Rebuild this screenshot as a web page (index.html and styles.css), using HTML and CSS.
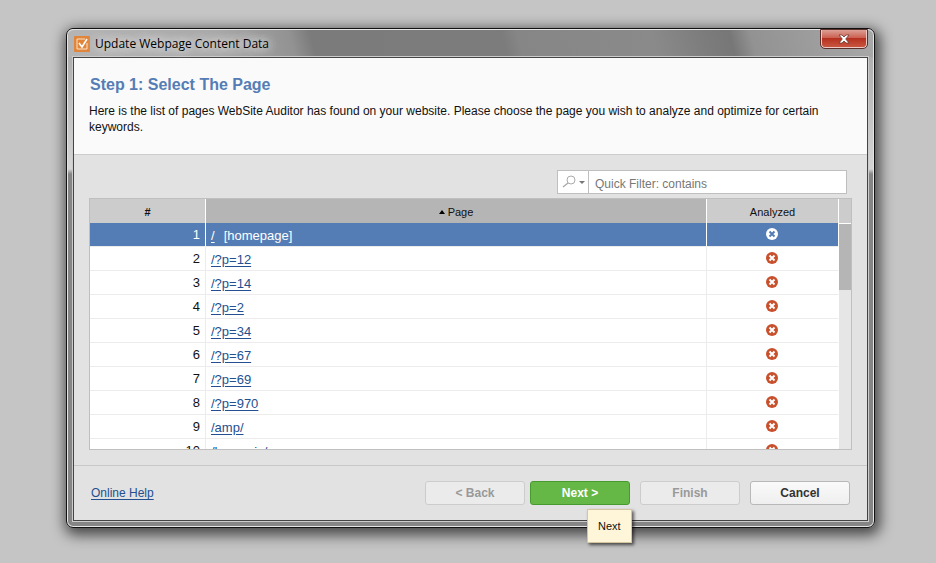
FILE: index.html
```html
<!DOCTYPE html>
<html lang="en">
<head>
    <title>Update Webpage Content Data</title>
    <meta charset="utf-8">
    <link rel="stylesheet" href="styles.css">
</head>

<body>
    <svg class="sprite">
        <symbol id="cross" viewBox="0 0 12 12">
            <circle cx="6" cy="6" r="6" fill="currentColor"/>
            <path class="cross-mark" d="M3.500 3.500l5 5M8.500 3.500l-5 5"/>
        </symbol>
    </svg>
    <div class="window">
        <div class="titlebar">
            <svg class="logo" viewBox="0 0 16 16">
                <rect width="16" height="16" rx="1" fill="#e0853a"/>
                <path d="M11 3H3v10h10V7" fill="none" stroke="#fbe3c8" stroke-width="1"/>
                <path d="M5 7l3 4 5-8" fill="none" stroke="#fff" stroke-width="1.6"/>
            </svg>
            <span class="title">Update Webpage Content Data</span>
            <button class="close" aria-label="Close">
                <svg viewBox="0 0 12 10"><path d="M1 1h3l2 2 2-2h3L7.700 5 11 9H8L6 7 4 9H1l3.300-4z" fill="#fff" stroke="#6b3a36" stroke-width=".8"/></svg>
            </button>
        </div>
        <div class="client">
            <div class="intro">
                <h1>Step 1: Select The Page</h1>
                <p>Here is the list of pages WebSite Auditor has found on your website. Please choose the page you wish to analyze and optimize for certain keywords.</p>
            </div>
            <div class="content">
                <div class="filter">
                    <button class="filter-type" aria-label="Filter type">
                        <svg viewBox="0 0 24 14">
                            <circle cx="9" cy="5" r="4" fill="none" stroke="#aaa"/>
                            <path d="M6 8l-5 4" stroke="#aaa" stroke-width="1.500"/>
                            <path d="M17 6h6l-3 3z" fill="#777"/>
                        </svg>
                    </button>
                    <input type="text" placeholder="Quick Filter: contains" aria-label="Quick Filter">
                </div>
                <div class="pane">
                    <table>
                        <thead>
                            <tr>
                                <th class="num">#</th>
                                <th class="sorted"><svg class="arrow" viewBox="0 0 6 4"><path d="M0 4l3-4 3 4z"/></svg>Page</th>
                                <th class="state">Analyzed</th>
                            </tr>
                        </thead>
                        <tbody>
                            <tr class="selected"><td class="num">1</td><td><a href="#">/</a><span class="note">[homepage]</span></td><td class="state"><svg><use href="#cross"/></svg></td></tr>
                            <tr><td class="num">2</td><td><a href="#">/?p=12</a></td><td class="state"><svg><use href="#cross"/></svg></td></tr>
                            <tr><td class="num">3</td><td><a href="#">/?p=14</a></td><td class="state"><svg><use href="#cross"/></svg></td></tr>
                            <tr><td class="num">4</td><td><a href="#">/?p=2</a></td><td class="state"><svg><use href="#cross"/></svg></td></tr>
                            <tr><td class="num">5</td><td><a href="#">/?p=34</a></td><td class="state"><svg><use href="#cross"/></svg></td></tr>
                            <tr><td class="num">6</td><td><a href="#">/?p=67</a></td><td class="state"><svg><use href="#cross"/></svg></td></tr>
                            <tr><td class="num">7</td><td><a href="#">/?p=69</a></td><td class="state"><svg><use href="#cross"/></svg></td></tr>
                            <tr><td class="num">8</td><td><a href="#">/?p=970</a></td><td class="state"><svg><use href="#cross"/></svg></td></tr>
                            <tr><td class="num">9</td><td><a href="#">/amp/</a></td><td class="state"><svg><use href="#cross"/></svg></td></tr>
                            <tr><td class="num">10</td><td><a href="#">/humanis/</a></td><td class="state"><svg><use href="#cross"/></svg></td></tr>
                        </tbody>
                    </table>
                    <div class="scrollbar"><div class="thumb"></div></div>
                </div>
            </div>
            <div class="footer">
                <a class="help" href="#">Online Help</a>
                <button disabled>&lt; Back</button>
                <div class="next">
                    <button class="primary">Next &gt;</button>
                    <div class="tooltip">Next</div>
                </div>
                <button class="finish" disabled>Finish</button>
                <button>Cancel</button>
            </div>
        </div>
    </div>
</body>

</html>
```
FILE: styles.css
```css
* {
    box-sizing: border-box;
}

body {
    margin: 0;
    padding: 28px 61px 35px 66px;
    background-color: #c5c5c5;
    font-family: "Liberation Sans", Arial, sans-serif;
    font-size: 12px;
    color: #111;
}

button, input {
    font-family: inherit;
    font-size: 12px;
    margin: 0;
}

.sprite {
    display: none;
}

.window {
    border: 1px solid #111;
    border-radius: 7px;
    padding: 0 6px 6px;
    background: linear-gradient(#a5a5a5 0, #d5d5d5 140px, #858585 145px, #858585 100%);
    box-shadow: inset 0 0 0 1px #e4e4e4, 2px 4px 14px 3px rgba(0, 0, 0, .65);
    background-clip: padding-box;
}

/* title bar */
.titlebar {
    display: flex;
    align-items: center;
    height: 28px;
    margin: 0 -5px;
    padding: 0 6px 0 6px;
    border-top: 1px solid #e4e4e4;
    border-radius: 6px 6px 0 0;
    background: linear-gradient(75deg, #b5b5b5 0, #a9a9a9 150px, #929292 220px, #7b7b7b 240px, #7c7c7c 425px, #868686 440px, #8a8a8a 570px, #7c7c7c 620px, #777 645px, #929292 665px, #a8a8a8 100%);
}

.logo {
    width: 16px;
    height: 16px;
}

.title {
    flex: 1;
    padding-left: 5px;
    font-family: "Open Sans", sans-serif;
    color: #000;
    text-shadow: 0 0 8px #ddd, 0 0 8px #ddd, 0 0 12px #ddd;
}

.close {
    align-self: flex-start;
    display: flex;
    align-items: center;
    justify-content: center;
    width: 46px;
    height: 18px;
    padding: 0;
    border: 1px solid #eccac5;
    border-top: 0;
    border-radius: 0 0 4px 4px;
    outline: 1px solid #5b2f2b;
    background: linear-gradient(#dda096, #cb6152 45%, #b5311f 50%, #c95540);
}

.close svg {
    width: 12px;
    height: 10px;
}

.client {
    border: 1px solid #444;
    outline: 1px solid #ccc;
    background-color: #e2e2e2;
}

.intro {
    padding: 17px 15px 19px;
    border-bottom: 1px solid #ccc;
    background-color: #fafafa;
}

h1 {
    margin: 0 0 8px 1px;
    font-size: 16px;
    line-height: 20px;
    color: #557db5;
}

p {
    margin: 0;
    line-height: 16px;
}

.content {
    padding: 15px 15px;
}

/* quick filter */
.filter {
    display: flex;
    width: 290px;
    height: 24px;
    margin: 0 5px 4px auto;
    border: 1px solid #bfbfbf;
    background-color: #fff;
}

.filter-type {
    width: 31px;
    padding: 0 0 0 4px;
    border: 0;
    border-right: 1px solid #bfbfbf;
    background: none;
}

.filter-type svg {
    display: block;
    width: 24px;
    height: 14px;
}

.filter input {
    flex: 1;
    min-width: 0;
    padding: 3px 6px 0;
    border: 0;
    background: none;
}

.filter input::placeholder {
    color: #777;
}

/* page list */
.pane {
    display: flex;
    height: 252px;
    overflow: hidden;
    border: 1px solid #bfbfbf;
    background-color: #fff;
}

table {
    flex: 1;
    table-layout: fixed;
    border-collapse: separate;
    border-spacing: 0;
    font-size: 13px;
}

th {
    height: 24px;
    padding: 2px 0 0;
    border-right: 1px solid #fff;
    background-color: #ccc;
    font-size: 11px;
    font-weight: normal;
}

th.num {
    width: 116px;
    font-weight: bold;
}

th.state {
    width: 132px;
}

th.sorted {
    background-color: #b5b5b5;
}

.arrow {
    width: 6px;
    height: 4px;
    margin-right: 3px;
    vertical-align: 2px;
}

td {
    height: 24px;
    padding: 1px 5px 0;
    border-right: 1px solid #ececec;
    border-bottom: 1px solid #ececec;
    white-space: nowrap;
}

td.num {
    padding: 0 5px 1px;
    text-align: right;
}

td.state {
    padding: 0 2px 2px 0;
    border-right-color: #fff;
    text-align: center;
}

td.state svg {
    display: block;
    width: 12px;
    height: 12px;
    margin: 0 auto;
    color: #c9502c;
}

.cross-mark {
    stroke: var(--mark, #fff);
    stroke-width: 2;
}

a {
    color: #24508f;
    text-underline-offset: 2px;
}

.note {
    padding-left: 9px;
}

.selected {
    --mark: #557db5;
}

.selected td {
    border-right-color: #fff;
    background-color: #557db5;
    color: #fff;
}

.selected a {
    color: #fff;
}

.selected td.state svg {
    color: #fff;
}

.scrollbar {
    width: 12px;
    border-top: 24px solid #ccc;
    background-color: #e6e6e6;
}

.thumb {
    height: 67px;
    border-top: 1px solid #fff;
    background-color: #b5b5b5;
}

/* buttons */
.footer {
    display: flex;
    align-items: center;
    gap: 5px;
    padding: 15px 17px;
    border-top: 1px solid #c8c8c8;
}

.help {
    margin-right: auto;
}

.footer button {
    display: block;
    width: 100px;
    height: 24px;
    padding: 0;
    border: 1px solid #b8b8b8;
    border-radius: 3px;
    background: linear-gradient(#fafafa, #efefef);
    font-weight: bold;
    color: #333;
}

.footer button:disabled {
    border-color: #ccc;
    background: #ebebeb;
    color: #999;
}

.footer .primary {
    border-color: #479a30;
    background: #65b845;
    color: #fff;
}

.footer .finish {
    margin: 0 5px;
}

.next {
    position: relative;
}

.tooltip {
    position: absolute;
    top: 28px;
    left: 57px;
    padding: 10px;
    border: 1px solid #d3c6a0;
    background-color: #fff5d8;
    box-shadow: 2px 2px 3px rgba(0, 0, 0, .6);
    font-size: 11px;
}
```
